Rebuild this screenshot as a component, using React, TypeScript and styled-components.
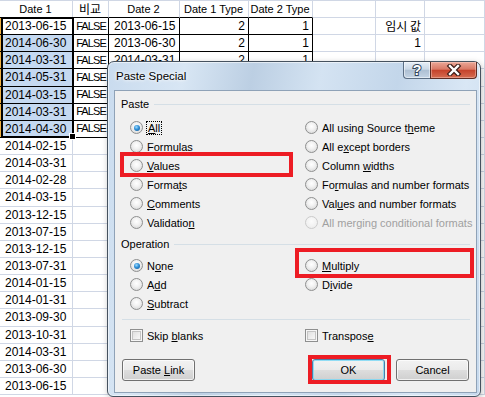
import React from "react";
import styled, { createGlobalStyle, css } from "styled-components";

const GlobalStyle = createGlobalStyle`
  html, body {
    margin: 0;
    padding: 0;
    background: #fff;
    overflow: hidden;
  }
`;

const Page = styled.div`
  position: relative;
  width: 485px;
  height: 397px;
  overflow: hidden;
  font-family: "Liberation Sans", Arial, sans-serif;
`;

/* ---------- spreadsheet ---------- */

const Sheet = styled.div`
  display: grid;
  grid-template-columns: 73px 36px 71px 69px 64px 63px 49px 60px;
  grid-template-rows: 17px repeat(22, 17.15px);
  border-top: 1px solid #d0d7e5;
  font-size: 12px;
  color: #000;
`;

type Align = "left" | "center" | "right";

const Cell = styled.div<{
  $align: Align;
  $boxed?: boolean;
  $boxedBottom?: boolean;
  $range?: boolean;
  $edge?: boolean;
  $head?: boolean;
  $kr?: boolean;
  $narrow?: boolean;
}>`
  box-sizing: border-box;
  display: flex;
  align-items: center;
  justify-content: ${(p) =>
    p.$align === "left" ? "flex-start" : p.$align === "right" ? "flex-end" : "center"};
  padding-left: ${(p) => (p.$align === "left" ? "5px" : "2px")};
  padding-right: ${(p) => (p.$narrow ? "1px" : "3px")};
  border-right: 1px solid ${(p) => (p.$boxed ? "#000" : "#d0d7e5")};
  border-bottom: 1px solid ${(p) => (p.$boxed || p.$boxedBottom ? "#000" : "#d0d7e5")};
  background: ${(p) => (p.$range ? "#c5d9f1" : "#fff")};
  white-space: nowrap;
  overflow: hidden;
  line-height: 1;
  font-size: ${(p) => (p.$head ? "11px" : "12px")};
  ${(p) =>
    p.$kr &&
    css`
      font-family: "Noto Sans CJK KR", sans-serif;
      font-size: 12px;
    `}
  ${(p) =>
    p.$narrow &&
    css`
      font-size: 11px;
      letter-spacing: -0.9px;
    `}
  ${(p) =>
    p.$edge &&
    css`
      box-shadow: inset 1px 0 0 #f0b040, inset 2px 0 0 #000;
    `}
`;

const Selection = styled.div`
  position: absolute;
  left: 1px;
  top: 17px;
  width: 73px;
  height: 121px;
  box-sizing: border-box;
  border: 2px solid #000;
  pointer-events: none;
`;

const FillHandle = styled.div`
  position: absolute;
  right: -4px;
  bottom: -4px;
  width: 5px;
  height: 5px;
  background: #000;
  border: 1px solid #fff;
`;

const dateA = [
  "2013-06-15", "2014-06-30", "2014-03-31", "2014-05-31", "2014-03-15", "2014-03-31",
  "2014-04-30", "2014-02-15", "2014-03-31", "2014-02-28", "2014-03-15", "2013-12-15",
  "2013-07-15", "2013-12-15", "2013-07-31", "2014-01-15", "2014-01-31", "2013-09-30",
  "2013-10-31", "2014-03-31", "2013-06-30", "2013-06-15",
];
// only the rows that show above the dialog are filled in columns C..E
const dateB = ["2013-06-15", "2013-06-30", "2014-03-31"];
const headers = ["Date 1", "비교", "Date 2", "Date 1 Type", "Date 2 Type", "", "", ""];

const Spreadsheet = () => (
  <Sheet>
    {headers.map((h, c) => (
      <Cell key={`h${c}`} $align="center" $head $kr={c === 1} $boxedBottom={c < 5}>
        {h}
      </Cell>
    ))}
    {dateA.map((d, r) => {
      const top = r < 7;
      const shown = r < 3;
      const values: [string, Align, boolean?, boolean?][] = [
        [d, "left"],
        [top ? "FALSE" : "", "center", false, true],
        [shown ? dateB[r] : "", "left"],
        [shown ? "2" : "", "right"],
        [shown ? "1" : "", "right"],
        ["", "right"],
        [r === 0 ? "임시 값" : r === 1 ? "1" : "", "right", r === 0],
        ["", "right"],
      ];
      return values.map(([text, align, kr, narrow], c) => (
        <Cell
          key={`${r}-${c}`}
          $align={align}
          $boxed={top && c < 5}
          $range={c === 0 && r > 0 && r < 7}
          $edge={c === 0 && top}
          $kr={kr}
          $narrow={narrow}
        >
          {text}
        </Cell>
      ));
    })}
  </Sheet>
);

/* ---------- dialog ---------- */

const Window = styled.div`
  position: absolute;
  left: 107px;
  top: 61px;
  width: 374px;
  height: 336px;
  box-sizing: border-box;
  border: 1px solid #46525f;
  border-radius: 7px 7px 6px 6px;
  padding: 0 3px 3px 6px;
  display: flex;
  flex-direction: column;
  background: linear-gradient(
    100deg,
    #c9dbee 0%,
    #d8e6f4 18%,
    #bccfe3 34%,
    #d4e3f2 50%,
    #c3d6ea 68%,
    #d9e7f5 84%,
    #c6d9ed 100%
  );
  box-shadow: inset 0 0 0 1px rgba(255, 255, 255, 0.55), 1px 2px 6px rgba(0, 0, 0, 0.25);
  font-family: "Liberation Sans", Arial, sans-serif;
  font-size: 11px;
  color: #000;
`;

const TitleBar = styled.div`
  height: 28px;
  display: flex;
  align-items: flex-start;
`;

const Title = styled.div`
  padding: 7px 0 0 2px;
  font-size: 11.5px;
  line-height: 14px;
  text-shadow: 0 0 5px #fff, 0 0 3px #fff;
`;

const CaptionButtons = styled.div`
  margin-left: auto;
  display: flex;
`;

const CaptionButton = styled.div<{ $kind: "help" | "close" }>`
  height: 17px;
  box-sizing: border-box;
  display: flex;
  align-items: center;
  justify-content: center;
  ${(p) =>
    p.$kind === "help"
      ? css`
          width: 27px;
          border: 1px solid #5c6f85;
          border-top: none;
          border-right: none;
          border-radius: 0 0 0 4px;
          background: linear-gradient(#e6eef7 0%, #cbd8e6 45%, #aec0d3 52%, #c4d4e5 100%);
          box-shadow: inset 0 0 0 1px rgba(255, 255, 255, 0.5);
        `
      : css`
          width: 47px;
          border: 1px solid #5d2c24;
          border-top: none;
          border-radius: 0 0 4px 0;
          background: linear-gradient(#eaa797 0%, #d97966 45%, #c5432c 52%, #d56d52 100%);
          box-shadow: inset 0 0 0 1px rgba(255, 220, 210, 0.4);
        `}
`;

const Panel = styled.div`
  flex: 1;
  display: flex;
  flex-direction: column;
  border: 1px solid #8fa2b7;
  background: #f0f0f0;
  padding: 0 6px;
`;

const GroupHeader = styled.div<{ $mt: number }>`
  display: flex;
  align-items: center;
  gap: 5px;
  height: 14px;
  margin-top: ${(p) => p.$mt}px;
  font-size: 11px;
`;

const GroupRule = styled.div`
  flex: 1;
  height: 1px;
  background: #d5dfe6;
`;

const OptionGrid = styled.div<{ $mt: number; $rows: number }>`
  display: grid;
  grid-template-columns: 175px 1fr;
  grid-template-rows: repeat(${(p) => p.$rows}, 19px);
  grid-auto-flow: column;
  margin: ${(p) => p.$mt}px 0 0 9px;
`;

const Option = styled.label<{ $disabled?: boolean }>`
  display: flex;
  align-items: center;
  gap: 4px;
  white-space: nowrap;
  color: ${(p) => (p.$disabled ? "#a0a0a0" : "#000")};
  u {
    text-decoration-thickness: 1px;
    text-underline-offset: 1px;
  }
`;

const Radio = styled.span<{ $checked?: boolean; $disabled?: boolean }>`
  position: relative;
  flex: none;
  width: 13px;
  height: 13px;
  box-sizing: border-box;
  border-radius: 50%;
  border: 1px solid ${(p) => (p.$disabled ? "#cbcbcb" : "#8e8f8f")};
  background: ${(p) =>
    p.$disabled
      ? "radial-gradient(circle at 50% 40%, #fbfbfb 0%, #f1f1f1 60%, #e6e6e6 100%)"
      : "radial-gradient(circle at 50% 40%, #ffffff 0%, #f2f2f2 40%, #d0d0d0 100%)"};
  ${(p) =>
    p.$checked &&
    css`
      &::after {
        content: "";
        position: absolute;
        left: 2.5px;
        top: 2.5px;
        width: 6px;
        height: 6px;
        border-radius: 50%;
        background: radial-gradient(circle at 40% 35%, #9edcff 0%, #2f8fd6 45%, #0d4f8c 100%);
      }
    `}
`;

const Check = styled.span`
  flex: none;
  width: 13px;
  height: 13px;
  box-sizing: border-box;
  border: 1px solid #8e8f8f;
  background: linear-gradient(135deg, #d9d9d9 0%, #f0f0f0 60%, #fcfcfc 100%);
  box-shadow: inset 0 0 0 1px #f6f6f6, inset 0 0 0 2px #c4c4c4;
`;

const Focus = styled.span`
  outline: 1px dotted #000;
  outline-offset: 0;
  padding: 0 1px;
`;

const Separator = styled.div`
  height: 1px;
  margin: 6px 0 0 1px;
  background: #d5dfe6;
`;

const ButtonRow = styled.div`
  display: flex;
  gap: 11px;
  margin: 14px 1px 0 1px;
`;

const Button = styled.div<{ $default?: boolean; $push?: boolean }>`
  width: 73px;
  height: 22px;
  box-sizing: border-box;
  display: flex;
  align-items: center;
  justify-content: center;
  border: 1px solid ${(p) => (p.$default ? "#4b7fa8" : "#707070")};
  border-radius: 3px;
  background: linear-gradient(#f2f2f2 0%, #ebebeb 48%, #dddddd 52%, #cfcfcf 100%);
  box-shadow: inset 0 0 0 1px ${(p) => (p.$default ? "rgba(120, 215, 245, 0.8)" : "rgba(255, 255, 255, 0.7)")};
  margin-left: ${(p) => (p.$push ? "auto" : "0")};
  font-size: 11px;
`;

const Highlight = styled.div<{ $x: number; $y: number; $w: number; $h: number }>`
  position: absolute;
  left: ${(p) => p.$x}px;
  top: ${(p) => p.$y}px;
  width: ${(p) => p.$w}px;
  height: ${(p) => p.$h}px;
  box-sizing: border-box;
  border: 4px solid #ed1c24;
  pointer-events: none;
`;

const HelpGlyph = () => (
  <svg width="12" height="14" viewBox="0 0 12 14">
    <text
      x="6"
      y="12"
      textAnchor="middle"
      fontFamily="Liberation Sans, Arial, sans-serif"
      fontWeight="bold"
      fontSize="14"
      fill="#fff"
      stroke="#34475c"
      strokeWidth="2"
      paintOrder="stroke"
    >
      ?
    </text>
  </svg>
);

const CloseGlyph = () => (
  <svg width="16" height="12" viewBox="0 0 16 12">
    <path d="M4 2 L12 10 M12 2 L4 10" stroke="#3a1b16" strokeWidth="4.6" strokeLinecap="square" />
    <path d="M4 2 L12 10 M12 2 L4 10" stroke="#fff" strokeWidth="2.4" strokeLinecap="square" />
  </svg>
);

const PasteSpecialDialog = () => (
  <Window>
    <TitleBar>
      <Title>Paste Special</Title>
      <CaptionButtons>
        <CaptionButton $kind="help">
          <HelpGlyph />
        </CaptionButton>
        <CaptionButton $kind="close">
          <CloseGlyph />
        </CaptionButton>
      </CaptionButtons>
    </TitleBar>
    <Panel>
      <GroupHeader $mt={6}>
        Paste
        <GroupRule />
      </GroupHeader>
      <OptionGrid $mt={7} $rows={6}>
        <Option>
          <Radio $checked />
          <Focus>
            <u>A</u>ll
          </Focus>
        </Option>
        <Option>
          <Radio />
          <span>
            <u>F</u>ormulas
          </span>
        </Option>
        <Option>
          <Radio />
          <span>
            <u>V</u>alues
          </span>
        </Option>
        <Option>
          <Radio />
          <span>
            Forma<u>t</u>s
          </span>
        </Option>
        <Option>
          <Radio />
          <span>
            <u>C</u>omments
          </span>
        </Option>
        <Option>
          <Radio />
          <span>
            Validatio<u>n</u>
          </span>
        </Option>
        <Option>
          <Radio />
          <span>
            All using Source t<u>h</u>eme
          </span>
        </Option>
        <Option>
          <Radio />
          <span>
            All e<u>x</u>cept borders
          </span>
        </Option>
        <Option>
          <Radio />
          <span>
            Column <u>w</u>idths
          </span>
        </Option>
        <Option>
          <Radio />
          <span>
            Fo<u>r</u>mulas and number formats
          </span>
        </Option>
        <Option>
          <Radio />
          <span>
            Val<u>u</u>es and number formats
          </span>
        </Option>
        <Option $disabled>
          <Radio $disabled />
          <span>All merging conditional formats</span>
        </Option>
      </OptionGrid>

      <GroupHeader $mt={5}>
        Operation
        <GroupRule />
      </GroupHeader>
      <OptionGrid $mt={5} $rows={3}>
        <Option>
          <Radio $checked />
          <span>
            N<u>o</u>ne
          </span>
        </Option>
        <Option>
          <Radio />
          <span>
            A<u>d</u>d
          </span>
        </Option>
        <Option>
          <Radio />
          <span>
            <u>S</u>ubtract
          </span>
        </Option>
        <Option>
          <Radio />
          <span>
            <u>M</u>ultiply
          </span>
        </Option>
        <Option>
          <Radio />
          <span>
            D<u>i</u>vide
          </span>
        </Option>
      </OptionGrid>

      <Separator />

      <OptionGrid $mt={6} $rows={1}>
        <Option>
          <Check />
          <span>
            Skip <u>b</u>lanks
          </span>
        </Option>
        <Option>
          <Check />
          <span>
            Transpos<u>e</u>
          </span>
        </Option>
      </OptionGrid>

      <ButtonRow>
        <Button>
          <span>
            Paste <u>L</u>ink
          </span>
        </Button>
        <Button $default $push>
          OK
        </Button>
        <Button>Cancel</Button>
      </ButtonRow>
    </Panel>
  </Window>
);

export default function App() {
  return (
    <>
      <GlobalStyle />
      <Page>
        <Spreadsheet />
        <Selection>
          <FillHandle />
        </Selection>
        <PasteSpecialDialog />
        <Highlight $x={120} $y={152} $w={173} $h={25} />
        <Highlight $x={295} $y={248} $w={179} $h={30} />
        <Highlight $x={308} $y={355} $w={83} $h={29} />
      </Page>
    </>
  );
}
